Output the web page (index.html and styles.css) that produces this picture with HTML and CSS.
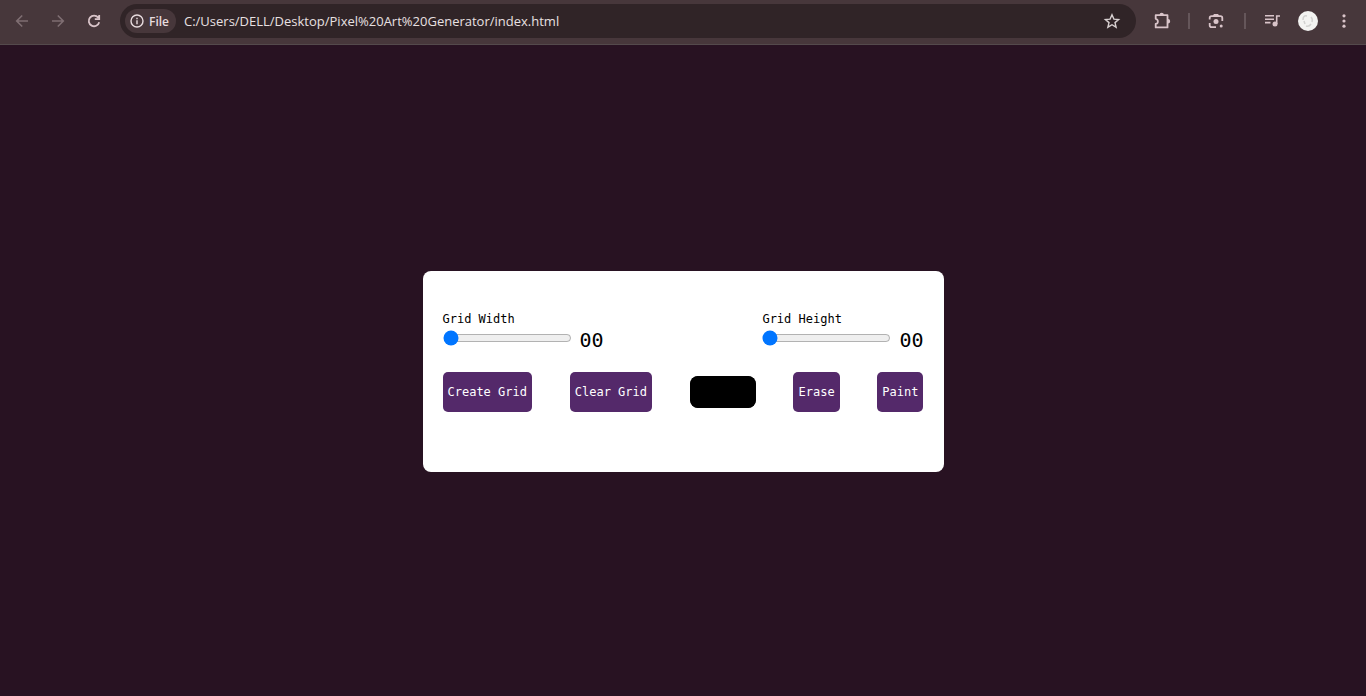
FILE: index.html
```html
<!DOCTYPE html>
<html lang="en">
<head>
<meta charset="utf-8">
<title>Pixel Art Generator</title>
<link rel="stylesheet" href="styles.css">
</head>
<body>
<header class="toolbar">
  <nav class="nav">
    <button class="icon-button dim" aria-label="Back"><svg class="icon" viewBox="0 0 20 20"><path d="M16 10H4.800M10.200 4.500L4.700 10l5.500 5.500"/></svg></button>
    <button class="icon-button dim" aria-label="Forward"><svg class="icon" viewBox="0 0 20 20"><path d="M4 10H15.200M9.800 4.500L15.300 10 9.800 15.500"/></svg></button>
    <button class="icon-button" aria-label="Reload"><svg class="icon heavy" viewBox="0 0 20 20"><path d="M14.200 6.600A5.300 5.300 0 1 0 15.200 11.300M15.200 4V8.200H10.800"/></svg></button>
  </nav>
  <div class="address">
    <button class="chip"><svg class="chip-icon" viewBox="0 0 14 14"><circle cx="7" cy="7" r="6"/><path d="M7 6.200V10.300M7 3.700V5.200"/></svg>File</button>
    <input class="url" type="text" aria-label="Address" value="C:/Users/DELL/Desktop/Pixel%20Art%20Generator/index.html">
    <button class="icon-button star" aria-label="Bookmark"><svg class="icon" viewBox="0 0 20 20"><path d="M10 3.800l1.900 4.300 4.700.4-3.600 3.100 1.100 4.600-4.100-2.500-4.100 2.500L7 11.600 3.400 8.500l4.700-.4z"/></svg></button>
  </div>
  <div class="actions">
    <button class="icon-button" aria-label="Extensions"><svg class="icon heavy" viewBox="0 0 20 20"><path stroke-linejoin="round" d="M3.700 4.200H15.500V16.400H3.700V13C6.600 12.400 6.600 8.400 3.700 7.800Z"/><path class="solid" d="M7.500 4a2.200 2.200 0 0 1 4.400 0zM16 8a2.200 2.200 0 0 1 0 4.400z"/></svg></button>
    <span class="divider"></span>
    <button class="icon-button lens" aria-label="Search with Lens"><svg class="icon heavy" viewBox="0 0 20 20"><path d="M3.700 8.500V7Q3.700 5.200 5.500 5.200H14.500Q16.300 5.200 16.300 7V10M3.700 12V14.300Q3.700 16.200 5.600 16.200H10"/><path class="solid" d="M6.500 5L8 3H12L13.500 5z"/><circle class="solid" cx="10" cy="10.500" r="2.500"/><circle class="solid" cx="15.200" cy="15" r="1.500"/></svg></button>
    <span class="divider"></span>
    <button class="icon-button" aria-label="Media controls"><svg class="icon" viewBox="0 0 20 20"><path d="M3 4.800H12M3 8.200H12M3 11.600H8.500M14.700 13V5H18"/><circle class="solid" cx="13" cy="13" r="2.500"/></svg></button>
    <button class="icon-button" aria-label="Profile"><svg class="avatar" viewBox="0 0 20 20"><circle cx="10" cy="10" r="10" fill="#f3f3f1"/><path d="M5 9Q5 4 9 5M6 10L7 13M13 6Q15 8 14 11M8 15Q11 16 13 13" fill="none" stroke="#d2d2d0" stroke-width="1.500"/></svg></button>
    <button class="icon-button" aria-label="Menu"><svg class="icon" viewBox="0 0 20 20"><circle class="solid" cx="10" cy="4.800" r="1.600"/><circle class="solid" cx="10" cy="10" r="1.600"/><circle class="solid" cx="10" cy="15.200" r="1.600"/></svg></button>
  </div>
</header>
<main class="page">
  <section class="card">
    <div class="row">
      <div class="field">
        <label for="grid-width">Grid Width</label>
        <div class="control"><input class="range" id="grid-width" type="range" min="1" max="35" value="1"><output class="value" for="grid-width">00</output></div>
      </div>
      <div class="field">
        <label for="grid-height">Grid Height</label>
        <div class="control"><input class="range" id="grid-height" type="range" min="1" max="35" value="1"><output class="value" for="grid-height">00</output></div>
      </div>
    </div>
    <div class="row">
      <button class="button">Create Grid</button>
      <button class="button">Clear Grid</button>
      <input class="color" type="color" value="#000000" aria-label="Paint colour">
      <button class="button">Erase</button>
      <button class="button">Paint</button>
    </div>
  </section>
</main>
</body>
</html>
```
FILE: styles.css
```css
* { box-sizing: border-box; }

body {
  margin: 0;
  min-height: 100vh;
  display: flex;
  flex-direction: column;
  background: #281222;
}

button, input { font: inherit; }

.toolbar {
  display: flex;
  align-items: center;
  padding: 4px 12px 6px;
  background: #47373b;
  border-bottom: 1px solid #544a4c;
  font-family: "Open Sans", "Noto Sans", sans-serif;
}

.nav { display: flex; gap: 16px; margin-right: 16px; }

.icon-button {
  display: flex;
  padding: 0;
  border: 0;
  background: none;
  color: #d9c4c9;
}

.dim { color: #7f6e72; }

.icon {
  width: 20px;
  height: 20px;
  fill: none;
  stroke: currentColor;
  stroke-width: 1.6;
}

.heavy { stroke-width: 1.8; }

.icon .solid { fill: currentColor; stroke: none; }

.address {
  flex: 1;
  display: flex;
  align-items: center;
  height: 34px;
  padding: 0 14px 0 5px;
  border-radius: 17px;
  background: #302427;
}

.chip {
  display: flex;
  align-items: center;
  gap: 5px;
  height: 24px;
  padding: 0 7px 0 5px;
  border: 0;
  border-radius: 12px;
  background: #47373b;
  color: #e8dcdf;
  font-size: 12px;
  font-weight: 600;
}

.chip-icon {
  width: 14px;
  height: 14px;
  fill: none;
  stroke: currentColor;
  stroke-width: 1.4;
}

.url {
  flex: 1;
  min-width: 0;
  margin-left: 8px;
  padding: 0;
  border: 0;
  outline: 0;
  background: none;
  color: #e8e0e1;
  font-size: 13px;
}

.star { color: #d8d0d1; }

.star .icon { stroke-width: 1.4; }

.actions { display: flex; align-items: center; gap: 16px; margin-left: 16px; }

.lens { margin-right: 2px; }

.divider { width: 2px; height: 16px; background: #65565a; }

.avatar { width: 20px; height: 20px; }

.page {
  flex: 1;
  display: flex;
  align-items: center;
  justify-content: center;
  padding-top: 1px;
  font-family: "DejaVu Sans Mono", monospace;
  font-size: 12px;
  color: #000;
}

.card {
  display: grid;
  gap: 20px;
  width: 100%;
  max-width: 521px;
  padding: 40px 20px 60px;
  border-radius: 8px;
  background: #fff;
}

.row { display: flex; align-items: center; justify-content: space-between; }

.field { display: grid; line-height: 17px; }

.control { display: flex; align-items: flex-start; gap: 8px; }

.range { width: 129px; height: 16px; margin: 2px 0 0; }

.value { font-size: 20px; line-height: 24px; }

.button {
  height: 40px;
  padding: 0 5px;
  border: 0;
  border-radius: 5px;
  background: #54296a;
  color: #fff;
}

.color {
  appearance: none;
  width: 66px;
  height: 32px;
  padding: 0;
  border: 0;
  border-radius: 8px;
  background: #000;
}

.color::-webkit-color-swatch-wrapper { padding: 0; }

.color::-webkit-color-swatch { border: 0; border-radius: 8px; }
```
